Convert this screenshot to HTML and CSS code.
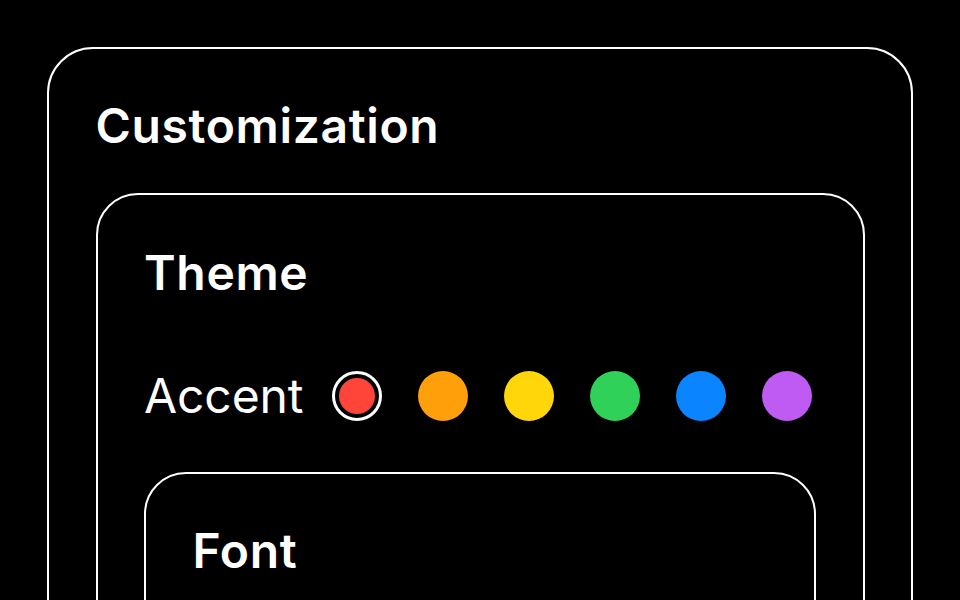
FILE: index.html
```html
<!DOCTYPE html>
<html lang="en">
<head>
<meta charset="utf-8">
<title>Customization</title>
<link rel="stylesheet" href="styles.css">
</head>
<body>
<section class="panel panel-outer">
  <h1 class="heading heading-outer">Customization</h1>
  <section class="panel panel-theme">
    <h2 class="heading heading-theme">Theme</h2>
    <div class="accent-row">
      <span class="accent-label">Accent</span>
      <div class="swatches">
        <span class="swatch selected"><span class="dot red"></span></span>
        <span class="swatch"><span class="dot orange"></span></span>
        <span class="swatch"><span class="dot yellow"></span></span>
        <span class="swatch"><span class="dot green"></span></span>
        <span class="swatch"><span class="dot blue"></span></span>
        <span class="swatch"><span class="dot purple"></span></span>
      </div>
    </div>
    <section class="panel panel-font">
      <h2 class="heading heading-font">Font</h2>
    </section>
  </section>
</section>
</body>
</html>
```

FILE: styles.css
```css
html, body {
  margin: 0;
  background: #000;
  height: 100%;
  overflow: hidden;
}
body {
  padding: 47px 47px 0 47px;
  box-sizing: border-box;
  font-family: Inter, "Noto Sans", "Liberation Sans", sans-serif;
  color: #fff;
}
.panel {
  border: 2.5px solid #fff;
  box-sizing: border-box;
  padding-left: 46.5px;
  padding-right: 46.5px;
}
.panel-outer {
  border-radius: 46px;
  padding-top: 47.5px;
  padding-bottom: 200px;
}
.panel-theme {
  border-radius: 42px;
  margin-top: 38px;
  padding-top: 49px;
  padding-bottom: 200px;
}
.panel-font {
  border-radius: 42px;
  margin-top: 47px;
  padding-top: 48px;
  padding-bottom: 200px;
}
.heading {
  margin: 0;
  font-size: 48px;
  line-height: 58px;
  font-weight: 600;
  letter-spacing: 0.65px;
}
.accent-row {
  display: flex;
  align-items: center;
  margin-top: 65px;
  height: 58px;
}
.accent-label {
  font-size: 48px;
  line-height: 58px;
  font-weight: 400;
  margin-right: 29px;
  letter-spacing: -0.1px;
}
.swatches {
  display: flex;
  align-items: center;
  gap: 36px;
}
.swatch {
  width: 50px;
  height: 50px;
  box-sizing: border-box;
  border-radius: 50%;
  display: flex;
  align-items: center;
  justify-content: center;
}
.dot {
  width: 50px;
  height: 50px;
  border-radius: 50%;
  display: block;
}
.swatch.selected {
  border: 3.5px solid #fff;
}
.swatch.selected .dot {
  width: 36px;
  height: 36px;
}
.red { background: #ff453a; }
.orange { background: #ff9f0a; }
.yellow { background: #ffd60a; }
.green { background: #30d158; }
.blue { background: #0a84ff; }
.purple { background: #bf5af2; }
```
